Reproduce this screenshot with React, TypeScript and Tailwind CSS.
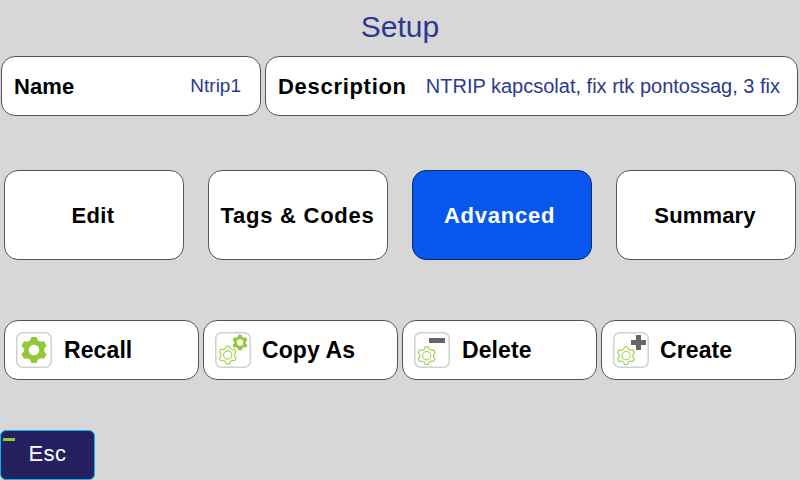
import React from 'react';

// builds a cog outline centred on (cx, cy)
function gearPath(cx: number, cy: number, outer: number, inner: number, teeth = 6) {
    const pts: string[] = [];
    const step = (Math.PI * 2) / teeth;
    for (let i = 0; i < teeth; i++) {
        const a = i * step - Math.PI / 2;
        const list: [number, number][] = [
            [a - step * 0.3, inner],
            [a - step * 0.17, outer],
            [a + step * 0.17, outer],
            [a + step * 0.3, inner],
        ];
        for (const [ang, r] of list) {
            pts.push(`${(cx + Math.cos(ang) * r).toFixed(2)} ${(cy + Math.sin(ang) * r).toFixed(2)}`);
        }
    }
    return `M${pts.join('L')}Z`;
}

function SolidGear({ cx, cy, r }: { cx: number; cy: number; r: number }) {
    return (
        <g>
            <path d={gearPath(cx, cy, r, r * 0.78)} fill="#93c83d" stroke="#93c83d" strokeWidth={r * 0.12} strokeLinejoin="round" />
            <circle cx={cx} cy={cy} r={r * 0.42} fill="#fff" />
        </g>
    );
}

function OutlineGear({ cx, cy, r }: { cx: number; cy: number; r: number }) {
    return (
        <g fill="none" stroke="#a2d24f" strokeWidth="1.1" strokeLinejoin="round">
            <path d={gearPath(cx, cy, r, r * 0.78)} />
            <circle cx={cx} cy={cy} r={r * 0.46} />
        </g>
    );
}

function ActionIcon({ kind }: { kind: string }) {
    return (
        <svg width="36" height="36" viewBox="0 0 36 36" className="shrink-0">
            <rect x="0.75" y="0.75" width="34.5" height="34.5" rx="6" fill="#fff" stroke="#d0d0d0" strokeWidth="1.5" />
            {kind === 'recall' && <SolidGear cx={18} cy={18} r={12.5} />}
            {kind === 'copy' && (
                <>
                    <OutlineGear cx={12.7} cy={23} r={9} />
                    <SolidGear cx={25} cy={10.5} r={7.5} />
                </>
            )}
            {kind === 'delete' && (
                <>
                    <OutlineGear cx={12.7} cy={23.7} r={9} />
                    <rect x="15" y="6" width="16" height="5" fill="#666" />
                </>
            )}
            {kind === 'create' && (
                <>
                    <OutlineGear cx={13} cy={23.7} r={9} />
                    <path d="M18 8h5V3h5v5h5v5h-5v5h-5v-5h-5z" fill="#666" />
                </>
            )}
        </svg>
    );
}

const tabs = [
    { label: 'Edit', spacing: 'tracking-[0.3px] pr-[2px]' },
    { label: 'Tags & Codes', spacing: 'tracking-[0.75px] pr-[1px]' },
    { label: 'Advanced', spacing: 'tracking-[0.75px] pr-[5px]' },
    { label: 'Summary', spacing: 'tracking-[0.15px] pr-[2px]' },
];
const actions = [
    { label: 'Recall', kind: 'recall', gap: 'ml-[12px]' },
    { label: 'Copy As', kind: 'copy', gap: 'ml-[11px]' },
    { label: 'Delete', kind: 'delete', gap: 'ml-[12px]' },
    { label: 'Create', kind: 'create', gap: 'ml-[11px]' },
];

export default function App() {
    return (
        <div className="w-[800px] h-[480px] overflow-hidden bg-[#d7d7d7] flex flex-col font-['Liberation_Sans',Arial,sans-serif]">
            <h1 className="h-[56px] pt-[9px] text-center text-[30px] leading-[36px] text-[#2b3990]">Setup</h1>

            <div className="flex gap-[4px] pl-[1px] h-[60px]">
                <div className="w-[260px] flex items-center justify-between pl-[12px] pr-[19px] bg-white border border-[#555] rounded-[14px]">
                    <span className="font-bold text-[22px] text-black tracking-[0.1px]">Name</span>
                    <span className="text-[19px] text-[#2b3990]">Ntrip1</span>
                </div>
                <div className="w-[533px] flex items-center justify-between pl-[12px] pr-[17px] bg-white border border-[#555] rounded-[14px]">
                    <span className="font-bold text-[22px] text-black tracking-[0.7px]">Description</span>
                    <span className="text-[20px] text-[#2b3990]">NTRIP kapcsolat, fix rtk pontossag, 3 fix</span>
                </div>
            </div>

            <div className="flex gap-[24px] px-[4px] mt-[54px] h-[90px]">
                {tabs.map(t => (
                    <div
                        key={t.label}
                        className={
                            t.label === 'Advanced'
                                ? `w-[180px] flex items-center justify-center rounded-[14px] border border-[#0b2a66] bg-[#0757ee] text-white font-bold text-[22px] ${t.spacing}`
                                : `w-[180px] flex items-center justify-center rounded-[14px] border border-[#555] bg-white text-black font-bold text-[22px] ${t.spacing}`
                        }
                    >
                        {t.label}
                    </div>
                ))}
            </div>

            <div className="flex gap-[4px] px-[4px] mt-[60px] h-[60px]">
                {actions.map(a => (
                    <div key={a.label} className="w-[195px] flex items-center pl-[11px] bg-white border border-[#555] rounded-[14px]">
                        <ActionIcon kind={a.kind} />
                        <span className={`${a.gap} font-bold text-[23px] text-black tracking-[0.1px]`}>{a.label}</span>
                    </div>
                ))}
            </div>

            <div className="relative mt-[50px] w-[95px] h-[50px] flex items-center justify-center pb-[4px] bg-[#252060] border border-[#0db4ee] rounded-[6px]">
                <span className="absolute left-[2px] top-[7px] w-[12px] h-[3px] bg-[#93c83d]" />
                <span className="text-white text-[22px] tracking-[0.5px]">Esc</span>
            </div>
        </div>
    );
}
